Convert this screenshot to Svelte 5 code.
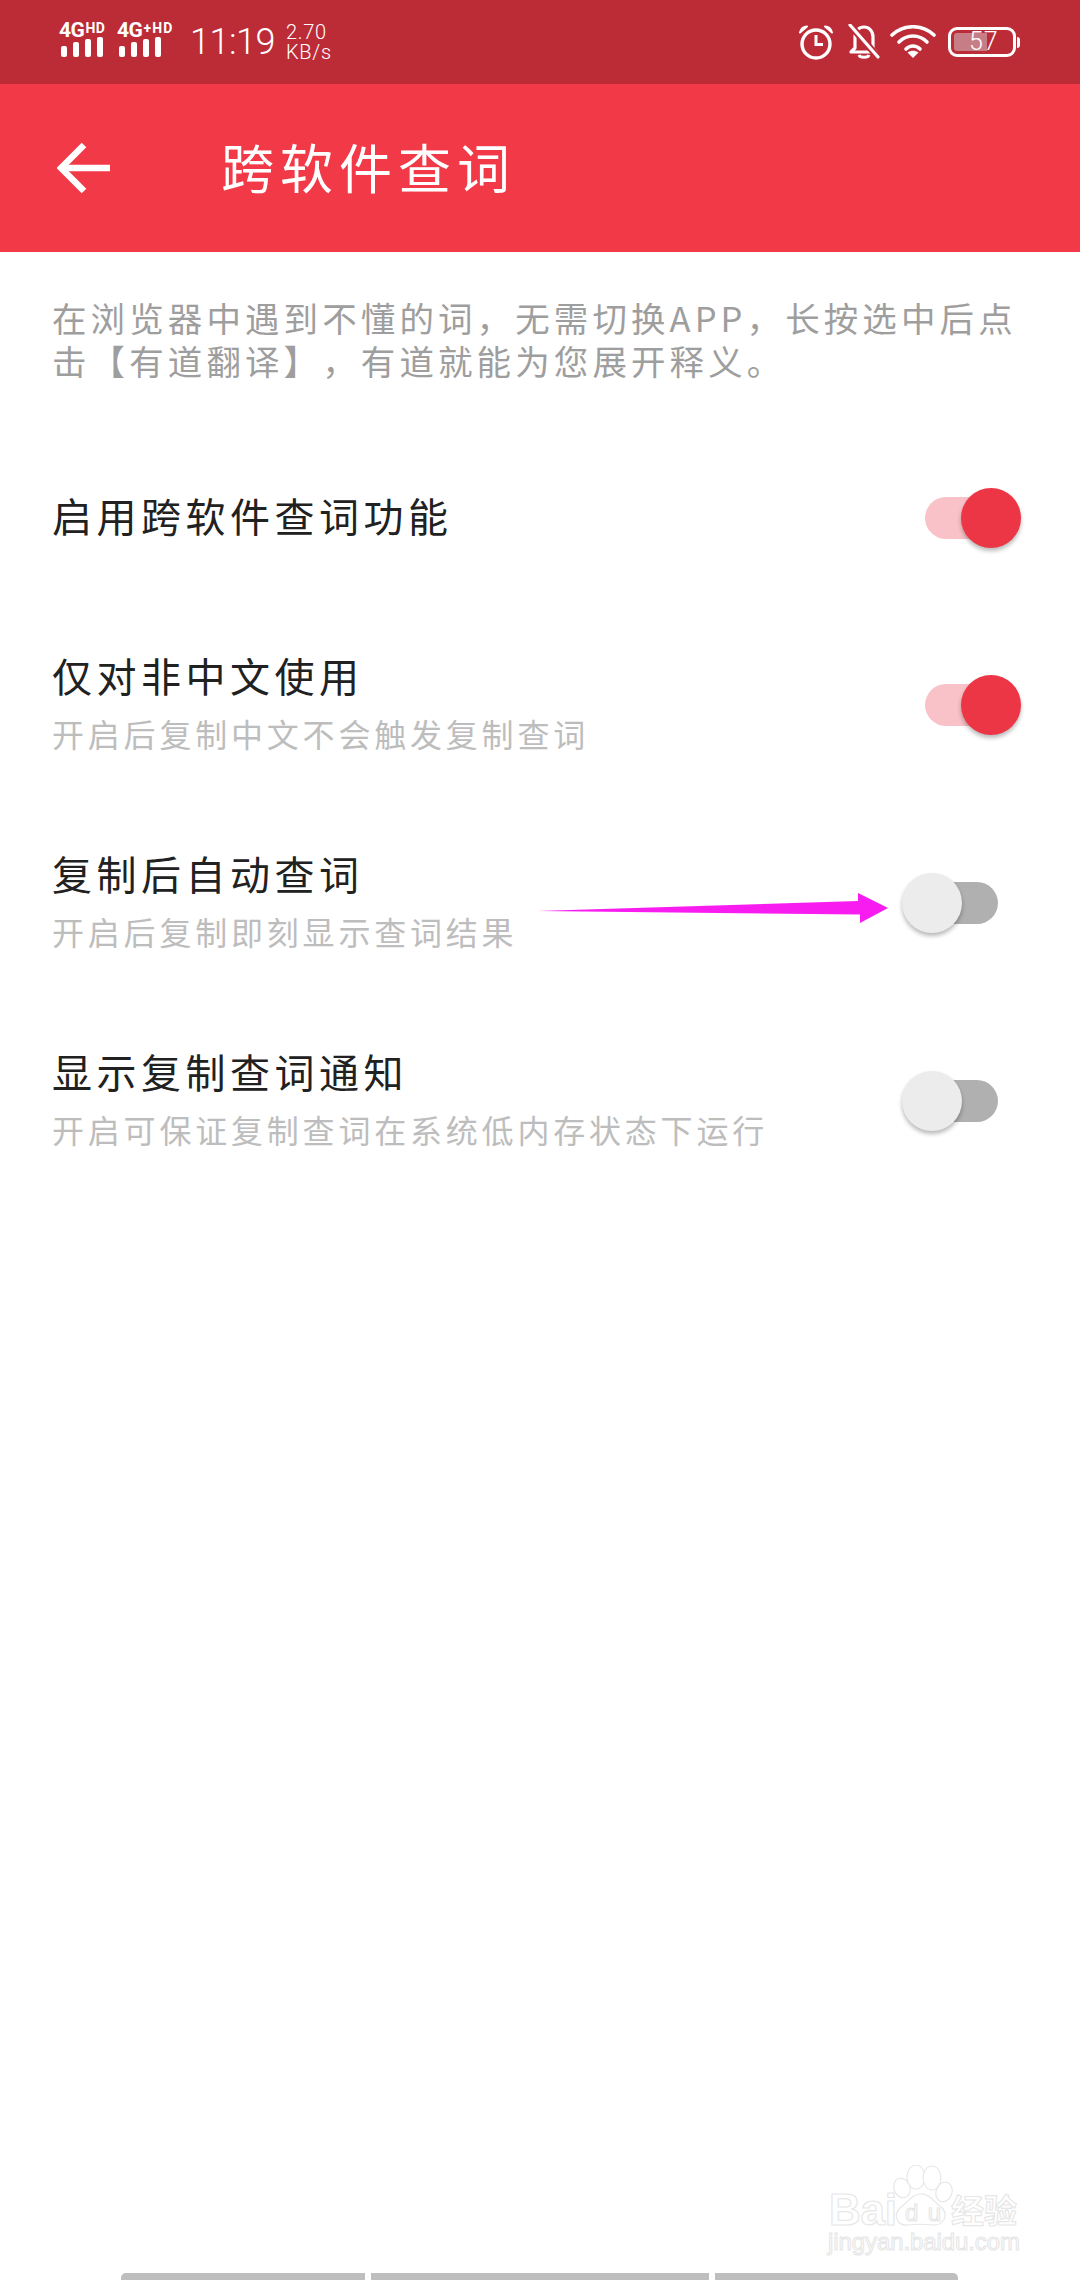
<script>
  const rows = [
    { title: '启用跨软件查词功能', sub: '', on: true },
    { title: '仅对非中文使用', sub: '开启后复制中文不会触发复制查词', on: true },
    { title: '复制后自动查词', sub: '开启后复制即刻显示查词结果', on: false },
    { title: '显示复制查词通知', sub: '开启可保证复制查词在系统低内存状态下运行', on: false }
  ];
</script>

<div class="page">
  <header class="status">
    <div class="net">
      <div class="tag"><span class="g">4G</span><span class="hd">HD</span></div>
      <div class="bars"><i class="b1"></i><i class="b2"></i><i class="b3"></i><i class="b4"></i></div>
    </div>
    <div class="net second">
      <div class="tag"><span class="g">4G</span><span class="hd">+HD</span></div>
      <div class="bars"><i class="b1"></i><i class="b2"></i><i class="b3"></i><i class="b4"></i></div>
    </div>
    <span class="time">11:19</span>
    <div class="speed"><span>2.70</span><span>KB/s</span></div>
    <div class="icons">
      <svg class="alarm" width="36" height="36" viewBox="0 0 36 36" fill="none" stroke="#fff">
        <circle cx="18" cy="20" r="14" stroke-width="3.4" />
        <path d="M18 11v9.5h7" stroke-width="3" />
        <path d="M2 8.5C3 4.5 5.500 2.500 9 2.500L2 8.500ZM34 8.500C33 4.500 30.500 2.500 27 2.500L34 8.500Z" fill="#fff" stroke-width="2" stroke-linejoin="round" />
      </svg>
      <svg class="bell" width="32" height="36" viewBox="0 0 32 36" fill="none" stroke="#fff" stroke-width="3.2">
        <path d="M7 13c0-6 4-10 9-10s9 4 9 10v12l3 3H3l3-3 1-1z" stroke-linejoin="round" />
        <path d="M11 31c1 3 9 3 10 0" stroke-width="3" />
        <path d="M2 1l28 32" stroke="#BC2C37" stroke-width="7" />
        <path d="M2 1l28 32" stroke-linecap="round" />
      </svg>
      <svg class="wifi" width="46" height="34" viewBox="0 0 46 34" fill="none" stroke="#fff" stroke-width="3.6" stroke-linecap="round">
        <path d="M2 10C14 -1 32 -1 44 10" />
        <path d="M9 17C17 9 29 9 37 17" />
        <path d="M16 24C20 20 26 20 30 24" />
        <path d="M17.500 27.500L23 33L28.500 27.500C25 25 21 25 17.500 27.500Z" fill="#fff" stroke="none" />
      </svg>
      <div class="battery">
        <div class="cell"><div class="fill"></div><span>57</span></div>
        <div class="nub"></div>
      </div>
    </div>
  </header>

  <div class="appbar">
    <svg width="54" height="52" viewBox="0 0 54 52" fill="none" stroke="#fff" stroke-width="6.500">
      <path d="M53 26H5" />
      <path d="M27 3L4 26L27 49" />
    </svg>
    <h1>跨软件查词</h1>
  </div>

  <p class="desc">在浏览器中遇到不懂的词&#xFF0C;无需切换APP&#xFF0C;长按选中后点<br />击【有道翻译】&#xFF0C;有道就能为您展开释义。</p>

  <main class="list">
    {#each rows as row}
      <section class="row" class:single={!row.sub}>
        <div class="copy">
          <div class="title">{row.title}</div>
          {#if row.sub}<div class="sub">{row.sub}</div>{/if}
        </div>
        <div class="switch" class:on={row.on}>
          <span class="track"></span>
          <span class="thumb"></span>
        </div>
      </section>
    {/each}
  </main>

  <svg class="arrow" width="360" height="40" viewBox="530 888 360 40">
    <path d="M538 911L858 901L858 893L888 908L860 923L860 914.500Z" fill="#F81CF0" />
  </svg>

  <svg class="mark" width="210" height="100" viewBox="0 0 210 100" fill="#fff" stroke="#E6E6E6" stroke-width="1.100">
    <ellipse cx="82" cy="23" rx="8" ry="10" transform="rotate(-20 82 23)" />
    <ellipse cx="96" cy="12" rx="9" ry="12" />
    <ellipse cx="112" cy="13" rx="9" ry="12" />
    <ellipse cx="124" cy="27" rx="8" ry="10" transform="rotate(20 124 27)" />
    <path d="M101 29C110 29 114 37 120 41C130 49 124 61 112 60C104 59 96 59 88 60C78 61 72 51 80 43C88 37 92 29 101 29Z" />
    <text x="9" y="60" font-family="Liberation Sans, sans-serif" font-size="44" font-weight="700" textLength="68">Bai</text>
    <text x="85" y="56" font-family="Liberation Sans, sans-serif" font-size="24" textLength="36">du</text>
    <text x="131" y="58" font-family="Noto Sans CJK SC, sans-serif" font-size="33" font-weight="700">经验</text>
    <text x="8" y="85" font-family="Liberation Sans, sans-serif" font-size="24" textLength="192">jingyan.baidu.com</text>
  </svg>

  <footer class="nav">
    <i class="n1"></i><i class="n2"></i><i class="n3"></i>
  </footer>
</div>

<style>
  :global(body) { margin: 0; background: #fff; }
  .page {
    position: relative;
    width: 1080px;
    height: 2280px;
    overflow: hidden;
    display: flex;
    flex-direction: column;
    background: #fff;
    font-family: "Noto Sans CJK SC", "Noto Sans", sans-serif;
  }
  .status {
    height: 84px;
    flex: none;
    background: #BC2C37;
    color: #fff;
    display: flex;
    align-items: center;
    padding-left: 59px;
    font-family: Roboto, sans-serif;
  }
  .net { width: 58px; display: flex; flex-direction: column; margin-top: -4px; }
  .net.second { width: 73px; }
  .tag { display: flex; height: 14px; align-items: flex-start; font-weight: 700; line-height: 14px; }
  .g { font-size: 21px; letter-spacing: -0.5px; }
  .hd { font-size: 14px; line-height: 10px; margin-left: 1px; letter-spacing: 0.4px; }
  .second .hd { letter-spacing: 1.200px; }
  .bars { display: flex; gap: 6.500px; align-items: flex-end; height: 20px; padding-left: 2px; }
  .bars i { width: 5.500px; background: #fff; border-radius: 2px; }
  .b1 { height: 11px; }
  .b2 { height: 15px; }
  .b3 { height: 18px; }
  .b4 { height: 20px; }
  .time { font-size: 36px; font-weight: 300; letter-spacing: -0.5px; width: 96px; }
  .speed { display: flex; flex-direction: column; font-size: 20px; font-weight: 300; line-height: 20px; letter-spacing: 0.7px; }
  .icons { margin-left: auto; display: flex; align-items: center; padding-right: 60px; gap: 14px; }
  .wifi { margin-left: -4px; }
  .battery { display: flex; align-items: center; margin-left: -2px; }
  .cell {
    position: relative;
    width: 68px;
    height: 30px;
    box-sizing: border-box;
    border: 3px solid #fff;
    border-radius: 9px;
    padding: 3px;
    display: flex;
  }
  .fill { width: 33px; background: #C77D85; border-radius: 3px 0 0 3px; }
  .cell span {
    position: absolute;
    left: 18px;
    top: -4px;
    font-size: 25px;
    font-weight: 300;
    line-height: 32px;
    letter-spacing: 1px;
  }
  .nub { width: 3px; height: 11px; background: #fff; border-radius: 0 3px 3px 0; margin-left: 1px; }
  .appbar {
    height: 168px;
    flex: none;
    background: #F13947;
    display: flex;
    align-items: center;
    padding-left: 57px;
    color: #fff;
  }
  h1 {
    margin: 0 0 5px 110px;
    font-size: 53px;
    font-weight: 400;
    letter-spacing: 6px;
    line-height: 60px;
  }
  .desc {
    margin: 0;
    height: 178px;
    flex: none;
    box-sizing: border-box;
    padding: 44px 0 0 52px;
    font-size: 34.500px;
    line-height: 43px;
    letter-spacing: 4.100px;
    text-spacing-trim: space-all;
    color: #9E9E9E;
    white-space: nowrap;
  }
  .list { display: flex; flex-direction: column; }
  .row {
    height: 198px;
    display: flex;
    align-items: center;
    justify-content: space-between;
    padding-left: 52px;
  }
  .row.single { height: 176px; }
  .copy { display: flex; flex-direction: column; gap: 14px; margin-bottom: 6px; }
  .title { font-size: 40px; line-height: 48px; letter-spacing: 4.500px; color: #212121; }
  .sub { font-size: 32px; line-height: 40px; letter-spacing: 3.800px; color: #BDBDBD; }
  .switch { display: flex; align-items: center; margin-right: 82px; flex-direction: row-reverse; }
  .switch.on { margin-right: 59px; flex-direction: row; }
  .track { display: block; width: 72px; height: 42px; border-radius: 21px; background: #B0B0B0; margin-left: -36px; }
  .thumb {
    display: block;
    position: relative;
    width: 60px;
    height: 60px;
    border-radius: 50%;
    background: #ECECEC;
    box-shadow: 0 3px 4px rgba(0, 0, 0, 0.28);
  }
  .on .track { background: #F9C2C8; width: 74px; margin-left: 0; }
  .on .thumb { background: #EC3646; margin-left: -38px; }
  .arrow { position: absolute; left: 530px; top: 888px; }
  .mark { position: absolute; left: 820px; top: 2165px; }
  .nav { margin-top: auto; display: flex; gap: 6px; padding-left: 121px; }
  .nav i { display: block; height: 7px; background: #BEBEBE; }
  .n1 { width: 244px; border-radius: 5px 0 0 0; }
  .n2 { width: 338px; }
  .n3 { width: 243px; border-radius: 0 5px 0 0; }
</style>
